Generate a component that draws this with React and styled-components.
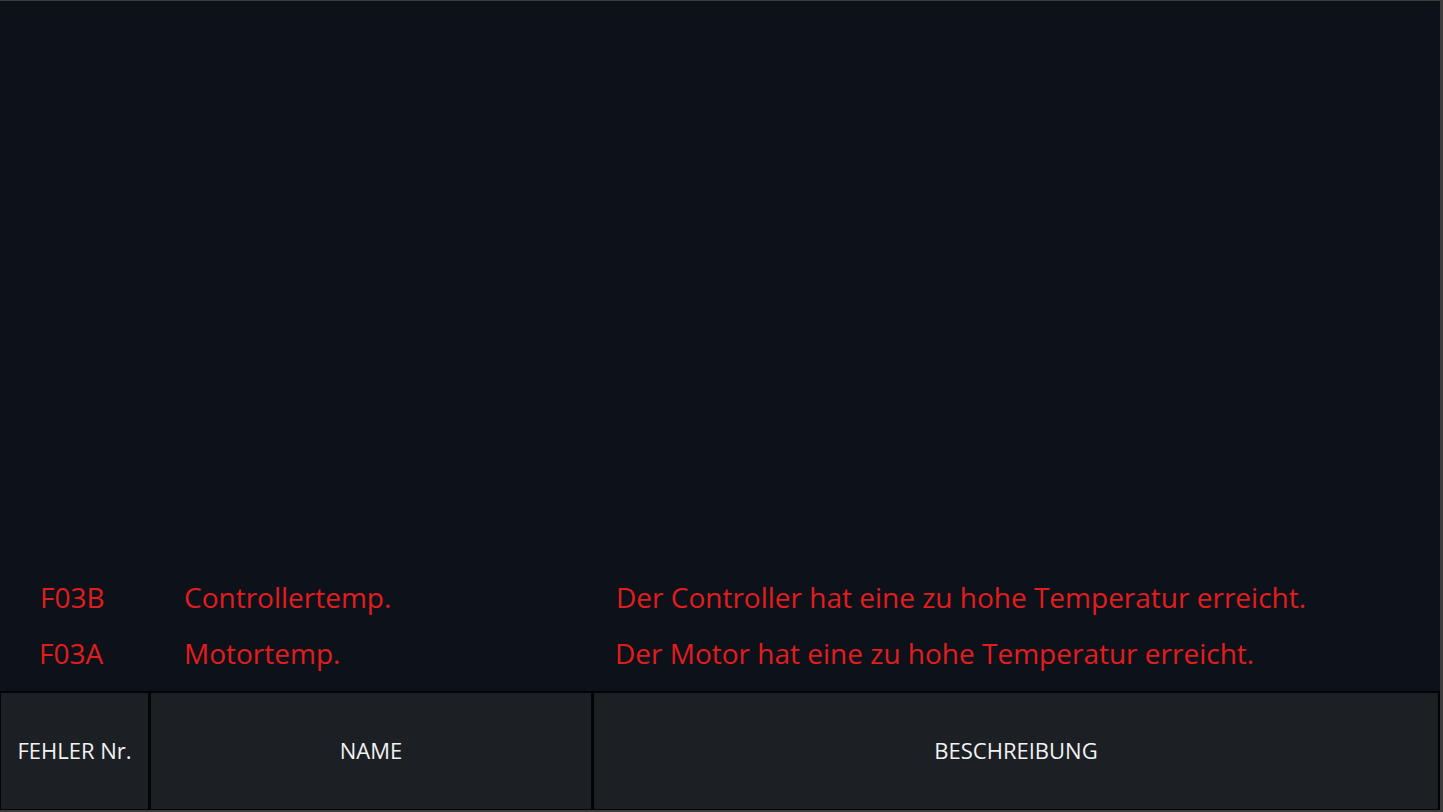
import React from "react";
import styled, { createGlobalStyle } from "styled-components";

const Global = createGlobalStyle`
  html, body { margin: 0; padding: 0; background: #3d3d3d; }
  #root { width: 1443px; height: 812px; }
`;

const Frame = styled.div`
  width: 1443px;
  height: 812px;
  box-sizing: border-box;
  background: #3d3d3d;
  padding: 1px 3px 2px 0;
  display: flex;
`;

const Screen = styled.div`
  flex: 1;
  display: flex;
  flex-direction: column;
  background: #0d111a;
`;

const Messages = styled.div`
  flex: 1;
  display: flex;
  flex-direction: column;
  justify-content: flex-end;
  padding-bottom: 10px;
`;

const Row = styled.div`
  display: grid;
  grid-template-columns: 150px 444px 1fr;
  height: 56px;
  align-items: center;
  font-family: "Open Sans", "Liberation Sans", sans-serif;
  font-size: 28px;
  color: #e21d1d;
`;

const Cell = styled.div`
  padding-left: ${(p) => p.$pad}px;
  white-space: nowrap;
`;

const Header = styled.div`
  height: 119px;
  box-sizing: border-box;
  display: grid;
  grid-template-columns: 147px 440px 1fr;
  gap: 3px;
  padding: 2px 2px 1px 1px;
  background: #030405;
`;

const HeadCell = styled.div`
  background: #1c1f24;
  display: flex;
  align-items: center;
  justify-content: center;
  font-family: "Open Sans", "Liberation Sans", sans-serif;
  font-size: 22px;
  color: #f2f2f2;
  padding-bottom: 2px;
`;

const rows = [
  { code: "F03B", name: "Controllertemp.", desc: "Der Controller hat eine zu hohe Temperatur erreicht.", c: 40, d: 22 },
  { code: "F03A", name: "Motortemp.", desc: "Der Motor hat eine zu hohe Temperatur erreicht.", c: 39, d: 21 },
];

export default function App() {
  return (
    <>
      <Global />
      <Frame>
        <Screen>
          <Messages>
            {rows.map((r) => (
              <Row key={r.code}>
                <Cell $pad={r.c}>{r.code}</Cell>
                <Cell $pad={34}>{r.name}</Cell>
                <Cell $pad={r.d}>{r.desc}</Cell>
              </Row>
            ))}
          </Messages>
          <Header>
            <HeadCell>FEHLER Nr.</HeadCell>
            <HeadCell>NAME</HeadCell>
            <HeadCell>BESCHREIBUNG</HeadCell>
          </Header>
        </Screen>
      </Frame>
    </>
  );
}
